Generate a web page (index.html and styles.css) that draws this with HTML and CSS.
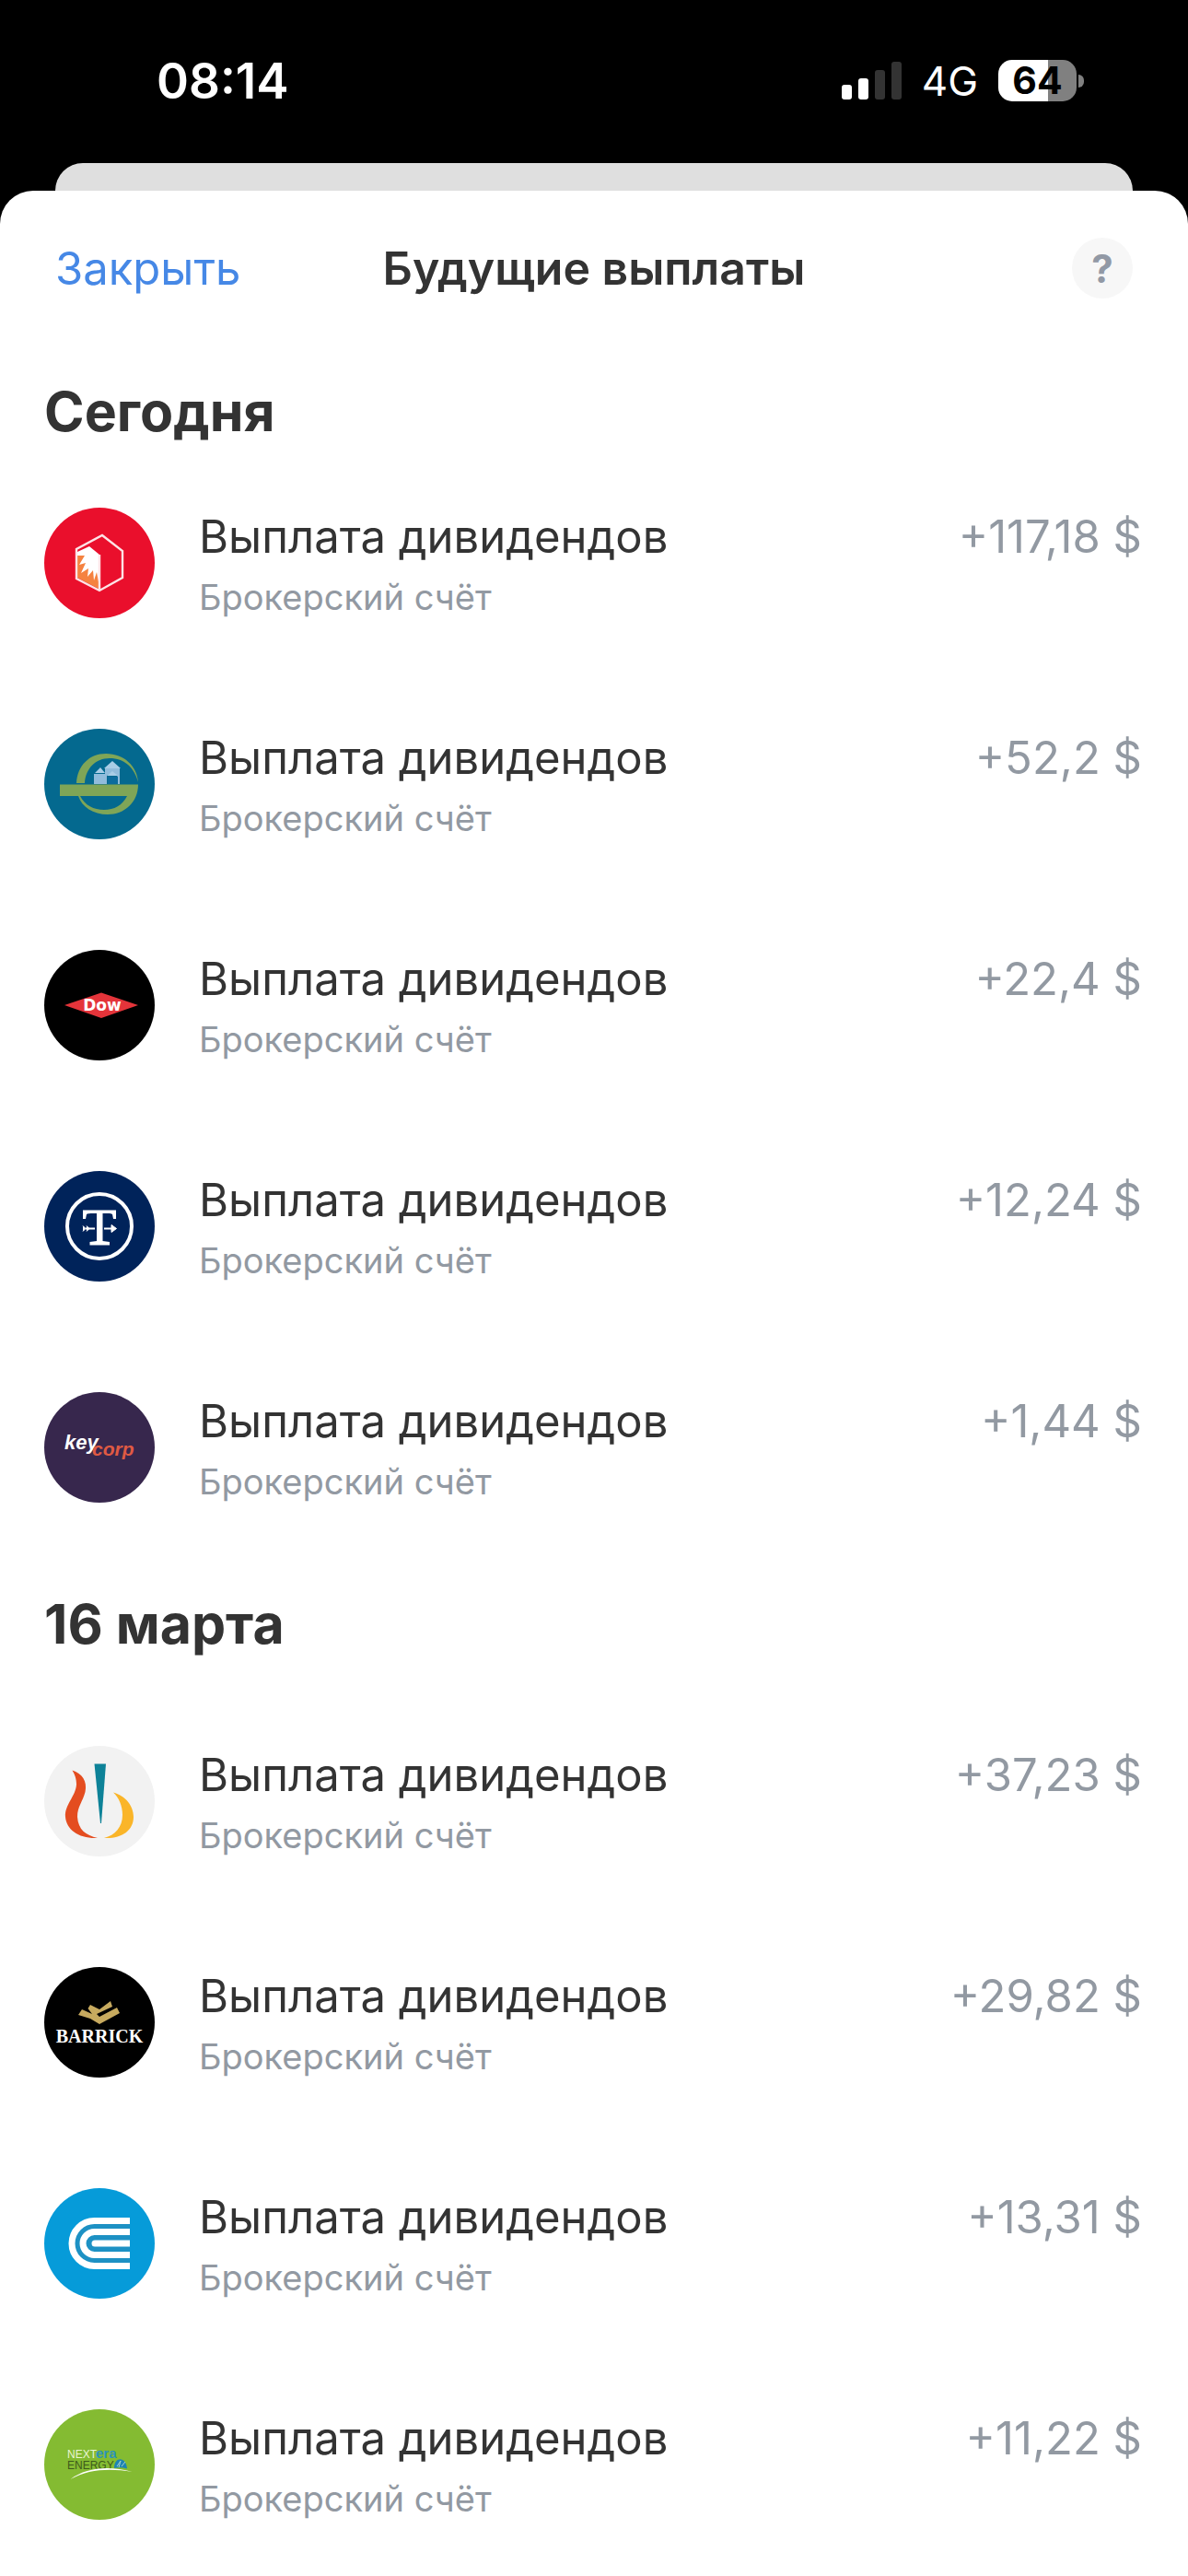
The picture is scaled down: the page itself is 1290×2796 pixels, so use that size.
FILE: index.html
```html
<!DOCTYPE html>
<html lang="ru">
<head>
<meta charset="utf-8">
<meta name="viewport" content="width=device-width, initial-scale=1">
<title>Будущие выплаты</title>
<link rel="stylesheet" href="styles.css">
</head>
<body>
<div class="status">
  <span class="time">08:14</span>
  <div class="indicators">
    <svg class="signal" viewBox="0 0 65 41" aria-hidden="true">
      <rect x="0" y="25" width="11" height="16" rx="3" fill="#fff"/>
      <rect x="18" y="18" width="11" height="23" rx="3" fill="#fff"/>
      <rect x="36" y="9" width="11" height="32" rx="3" fill="#333"/>
      <rect x="54" y="0" width="11" height="41" rx="3" fill="#333"/>
    </svg>
    <span class="network">4G</span>
    <div class="battery">
      <span class="level">64</span>
      <span class="tip"></span>
    </div>
  </div>
</div>
<div class="back-card"></div>
<main class="sheet">
  <header class="bar">
    <button class="close" type="button">Закрыть</button>
    <h1 class="title">Будущие выплаты</h1>
    <button class="help" type="button" aria-label="Справка">?</button>
  </header>

  <section>
    <h2 class="day">Сегодня</h2>
    <ul class="list">
      <li class="row">
        <svg class="logo" viewBox="0 0 120 120" aria-hidden="true">
          <circle cx="60" cy="60" r="60" fill="#ea0f2c"/>
          <path d="M36 52H46L59 58V88L36 76Z" fill="#f58240"/>
          <path d="M36 52V48L49 42L60 51V86L57 70L54 79L53 68L47 75L48 66L40 71L45 60L38 62L44 52Z" fill="#fff"/>
          <path d="M63 30L85 47V76L60 90L35 77V45ZM60 51V90" fill="none" stroke="#fde3e6" stroke-width="2.4"/>
        </svg>
        <div class="info"><span class="name">Выплата дивидендов</span><span class="account">Брокерский счёт</span></div>
        <span class="amount">+117,18 $</span>
      </li>
      <li class="row">
        <svg class="logo" viewBox="0 0 120 120" aria-hidden="true">
          <circle cx="60" cy="60" r="60" fill="#04698f"/>
          <path d="M35 59C36 40 49 27 67 27C87 27 101 41 102 58C98 42 87 32 71 32C56 32 45 43 44 59Z" fill="#7fa557"/>
          <path d="M17 60.500H102C102 80 87 93 69 93C53 93 41 85 37 73H39C44 83 54 88 65 88C76 88 85 83 90 73H17Z" fill="#7fa557"/>
          <path d="M54 60V49H66V43H82V60H80V52L74 47L68 51V60Z" fill="#91bcdb"/>
          <path d="M55 48L61 42L66 48ZM65 43L74 35L83 43ZM68 51L74 46L80 51Z" fill="#a9cde6"/>
          <path d="M69 52H80V60H69Z" fill="#0b6c9d"/>
        </svg>
        <div class="info"><span class="name">Выплата дивидендов</span><span class="account">Брокерский счёт</span></div>
        <span class="amount">+52,2 $</span>
      </li>
      <li class="row">
        <svg class="logo" viewBox="0 0 120 120" aria-hidden="true">
          <circle cx="60" cy="60" r="60" fill="#000"/>
          <path d="M22 60L62 46.500L102 60L62 74Z" fill="#e4343a"/>
          <text x="63" y="66" class="logo-dow" font-size="17" text-anchor="middle">Dow</text>
        </svg>
        <div class="info"><span class="name">Выплата дивидендов</span><span class="account">Брокерский счёт</span></div>
        <span class="amount">+22,4 $</span>
      </li>
      <li class="row">
        <svg class="logo" viewBox="0 0 120 120" aria-hidden="true">
          <circle cx="60" cy="60" r="60" fill="#00235a"/>
          <circle cx="60" cy="60" r="35" fill="none" stroke="#fff" stroke-width="4"/>
          <path d="M42 42.500H78V52H75L74 47C73 46 71 46 63.500 46V76L71 77V80.500H49.500V77L57 76V46C49 46 47 46 46 47L45 52H42Z" fill="#fff"/>
          <path d="M45 62.500H55M65 62.500H75" stroke="#fff" stroke-width="2" fill="none"/>
          <path d="M73 58.500L78.500 62.500L73 66.500ZM42 59.500L45 62.500L42 65.500M46 59.500L49 62.500L46 65.500" fill="#fff" stroke="#fff" stroke-width="1"/>
        </svg>
        <div class="info"><span class="name">Выплата дивидендов</span><span class="account">Брокерский счёт</span></div>
        <span class="amount">+12,24 $</span>
      </li>
      <li class="row">
        <svg class="logo" viewBox="0 0 120 120" aria-hidden="true">
          <circle cx="60" cy="60" r="60" fill="#37274d"/>
          <text x="22" y="62" class="logo-key" font-size="22" fill="#fff">key</text>
          <text x="52" y="69" class="logo-key" font-size="21" fill="#df5a43">corp</text>
        </svg>
        <div class="info"><span class="name">Выплата дивидендов</span><span class="account">Брокерский счёт</span></div>
        <span class="amount">+1,44 $</span>
      </li>
    </ul>
  </section>

  <section>
    <h2 class="day day-next">16 марта</h2>
    <ul class="list">
      <li class="row">
        <svg class="logo" viewBox="0 0 120 120" aria-hidden="true">
          <circle cx="60" cy="60" r="60" fill="#f2f2f2"/>
          <path d="M54.500 19.500H67L62 84H61Z" fill="#0d8298"/>
          <path d="M30.500 26.500C41 30 47 38 44.500 50C42 60 36 66 36 77C37 91 45 97 58 100C38 101 24 91 23 77C22 64 34 55 35 42C35 35 33 31 30.500 26.500Z" fill="#e44d20"/>
          <path d="M75 50.500C88 54 97 65 97 77C97 92 84 101 65 100C77 97 85 88 85 75C85 65 81 56 75 50.500Z" fill="#fab529"/>
        </svg>
        <div class="info"><span class="name">Выплата дивидендов</span><span class="account">Брокерский счёт</span></div>
        <span class="amount">+37,23 $</span>
      </li>
      <li class="row">
        <svg class="logo" viewBox="0 0 120 120" aria-hidden="true">
          <circle cx="60" cy="60" r="60" fill="#000"/>
          <path d="M41 46L52 51L47.500 45L50 41L60 46L72 37L74 43L57 51L60 54L79 44L82 50L60 62L50 56L37 52Z" fill="#c7aa5f"/>
          <text x="60" y="82" class="logo-barrick" font-size="20" text-anchor="middle">BARRICK</text>
        </svg>
        <div class="info"><span class="name">Выплата дивидендов</span><span class="account">Брокерский счёт</span></div>
        <span class="amount">+29,82 $</span>
      </li>
      <li class="row">
        <svg class="logo" viewBox="0 0 120 120" aria-hidden="true">
          <circle cx="60" cy="60" r="60" fill="#069bd9"/>
          <path d="M93 36H55A24 24 0 0 0 55 84H93Z" fill="#1d91c4"/>
          <path d="M93 35.500H54.500A24.500 24.500 0 0 0 54.500 84.500H93M93 47.500H54.500A12.500 12.500 0 0 0 54.500 72.500H93" stroke="#fff" stroke-width="7" fill="none"/>
          <path d="M93 56.500H55A3.500 3.500 0 0 0 55 63.500H93Z" fill="#fff"/>
        </svg>
        <div class="info"><span class="name">Выплата дивидендов</span><span class="account">Брокерский счёт</span></div>
        <span class="amount">+13,31 $</span>
      </li>
      <li class="row">
        <svg class="logo" viewBox="0 0 120 120" aria-hidden="true">
          <circle cx="60" cy="60" r="60" fill="#84bb32"/>
          <text x="25" y="53" class="logo-era" font-size="12" fill="#e9f5d2">NEXT</text>
          <text x="56" y="53" class="logo-era-bold" font-size="15" fill="#2c93b8">era</text>
          <text x="25" y="65" class="logo-era" font-size="12" fill="#3e5a1b">ENERGY</text>
          <path d="M76 64C76 51 89 51 90 64.500C85 63 80 63 76 64Z" fill="#1d84b4"/>
          <path d="M79 62L83 56L81 63M84 62L88 57" stroke="#a3cfcb" stroke-width="1" fill="none"/>
          <path d="M28.500 76C46 63 70 61 96 68C70 64 49 65 28.500 76Z" fill="#fff"/>
        </svg>
        <div class="info"><span class="name">Выплата дивидендов</span><span class="account">Брокерский счёт</span></div>
        <span class="amount">+11,22 $</span>
      </li>
    </ul>
  </section>
</main>
</body>
</html>
```
FILE: styles.css
```css
* {
  box-sizing: border-box;
}

body {
  margin: 0;
  min-height: 100vh;
  display: flex;
  flex-direction: column;
  background: #000;
  color: #333;
  font-family: Inter, "Liberation Sans", sans-serif;
}

button {
  border: 0;
  padding: 0;
  font: inherit;
  cursor: pointer;
}

.status {
  display: flex;
  align-items: center;
  justify-content: space-between;
  height: 175px;
  padding: 0 121px 0 170px;
  color: #fff;
}

.time {
  font-size: 53px;
  font-weight: 600;
}

.indicators {
  display: flex;
  align-items: center;
  gap: 22px;
}

.signal {
  width: 65px;
  height: 41px;
}

.network {
  font-size: 44px;
  font-weight: 400;
}

.battery {
  position: relative;
  width: 85px;
  height: 45px;
  border-radius: 15px;
  background: linear-gradient(to right, #fff 64%, #808080 64%);
  color: #000;
  font-size: 41px;
  font-weight: 700;
  line-height: 45px;
  text-align: center;
}

.tip {
  position: absolute;
  top: 16px;
  right: -8px;
  width: 6px;
  height: 14px;
  border-radius: 0 6px 6px 0;
  background: #808080;
}

.back-card {
  height: 30px;
  margin: 2px 60px 0;
  border-radius: 30px 30px 0 0;
  background: #dfdfdf;
}

.sheet {
  flex: 1;
  border-radius: 36px 36px 0 0;
  background: #fff;
}

.bar {
  display: grid;
  grid-template-columns: 1fr auto 1fr;
  align-items: center;
  height: 168px;
  padding: 0 60px;
}

.close {
  justify-self: start;
  background: none;
  color: #4688e6;
  font-size: 49px;
}

.title {
  margin: 0;
  font-size: 50px;
  font-weight: 600;
}

.help {
  justify-self: end;
  width: 66px;
  height: 66px;
  border-radius: 50%;
  background: #f7f7f7;
  color: #9299a5;
  font-size: 42px;
  font-weight: 700;
}

.day {
  margin: 0;
  padding: 28px 48px 0;
  font-size: 59px;
  font-weight: 700;
  line-height: 88px;
}

.day-next {
  padding-bottom: 28px;
}

.list {
  margin: 0;
  padding: 0;
  list-style: none;
}

.row {
  display: flex;
  align-items: flex-start;
  height: 240px;
  padding: 60px 50px 0 48px;
}

.logo {
  flex: none;
  width: 120px;
  height: 120px;
  margin-right: 48px;
}

.info {
  display: flex;
  flex: 1;
  flex-direction: column;
}

.name,
.amount {
  font-size: 49px;
  line-height: 64px;
}

.account {
  font-size: 38px;
  line-height: 66px;
}

.account,
.amount {
  color: #9299a2;
}

.logo-dow {
  fill: #fff;
  font-family: "DejaVu Sans", sans-serif;
  font-weight: 700;
}

.logo-key {
  font-family: "Liberation Sans", sans-serif;
  font-style: italic;
  font-weight: 700;
}

.logo-barrick {
  fill: #fff;
  font-family: "Liberation Serif", serif;
  font-weight: 700;
}

.logo-era {
  font-family: "Liberation Sans", sans-serif;
}

.logo-era-bold {
  font-family: "Liberation Sans", sans-serif;
  font-weight: 700;
}
```
